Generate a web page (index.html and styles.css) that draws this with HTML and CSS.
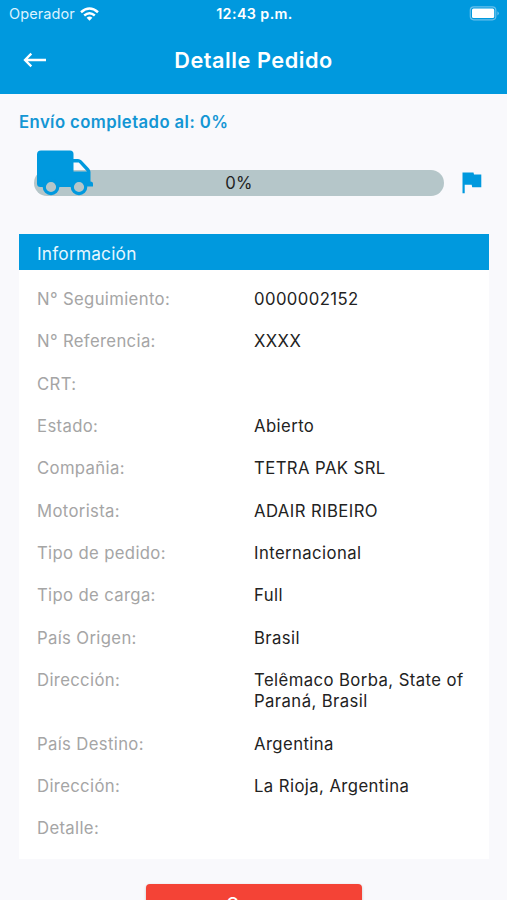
FILE: index.html
```html
<!DOCTYPE html>
<html lang="es">
<head>
<meta charset="utf-8">
<title>Detalle Pedido</title>
<link rel="stylesheet" href="styles.css">
</head>
<body>
<header class="header">
  <div class="status">
    <div class="carrier"><span>Operador</span>
      <svg width="19" height="14" viewBox="0 0 19 14"><g fill="none" stroke="#fff" stroke-width="2.5"><path d="M1 5.2Q9.5-2.2 18 5.2"/><path d="M4.2 8.5Q9.5 4 14.8 8.5"/></g><path d="M6.6 10.8Q9.5 8.4 12.4 10.8L9.5 13.8z" fill="#fff"/></svg>
    </div>
    <div class="clock">12:43 p.m.</div>
    <svg class="battery" width="31" height="15" viewBox="0 0 31 15"><rect x="1.3" y=".8" width="25.500" height="13" rx="3.500" fill="none" stroke="#68c0eb" stroke-width="1.200"/><rect x="3" y="2.600" width="22.200" height="9.400" rx="1.500" fill="#fff"/><path d="M28.400 5.200q3 2.200 0 4.400z" fill="#68c0eb"/></svg>
  </div>
  <div class="nav">
    <svg width="24" height="16" viewBox="0 0 24 16"><path d="M23 8H2.3M8.3 1.6L2 8l6.3 6.4" fill="none" stroke="#fff" stroke-width="2.3"/></svg>
    <h1>Detalle Pedido</h1>
  </div>
</header>
<main class="content">
  <p class="caption">Envío completado al: 0%</p>
  <div class="progress">
    <div class="bar">0%
      <svg class="truck" width="58" height="47" viewBox="0 0 58 47"><path fill="#0099de" fill-rule="evenodd" d="M5 .5H34Q37.5.5 37.5 4V9H42Q44 9 45.5 10.5L53 18.5Q54.5 20 54.5 22V31.5Q57 31.5 57 33.5V36.5H51A8.2 8.2 0 0 1 35.7 37H23.300A8.200 8.200 0 0 1 7.700 37H4.500Q1 37 1 33.500V4.500Q1 .5 5 .5ZM37.500 12.500V21.500H51L42.800 12.500Z"/><g fill="#b5c6c9" stroke="#0099de" stroke-width="3.200"><circle cx="15" cy="37" r="6.700"/><circle cx="43" cy="37" r="6.700"/></g></svg>
    </div>
    <svg class="flag" width="20" height="22" viewBox="0 0 20 22"><path d="M.5.5H11.5L12 2.5H19.3V15.3H10.2L9.7 12.8H2.7V21.3H.5z" fill="#0099de"/></svg>
  </div>
  <section class="card">
    <h2>Información</h2>
    <dl>
      <div><dt>N° Seguimiento:</dt><dd>0000002152</dd></div>
      <div><dt>N° Referencia:</dt><dd>XXXX</dd></div>
      <div><dt>CRT:</dt><dd></dd></div>
      <div><dt>Estado:</dt><dd>Abierto</dd></div>
      <div><dt>Compañia:</dt><dd>TETRA PAK SRL</dd></div>
      <div><dt>Motorista:</dt><dd>ADAIR RIBEIRO</dd></div>
      <div><dt>Tipo de pedido:</dt><dd>Internacional</dd></div>
      <div><dt>Tipo de carga:</dt><dd>Full</dd></div>
      <div><dt>País Origen:</dt><dd>Brasil</dd></div>
      <div><dt>Dirección:</dt><dd>Telêmaco Borba, State of Paraná, Brasil</dd></div>
      <div><dt>País Destino:</dt><dd>Argentina</dd></div>
      <div><dt>Dirección:</dt><dd>La Rioja, Argentina</dd></div>
      <div><dt>Detalle:</dt><dd></dd></div>
    </dl>
  </section>
  <button class="close">Cerrar</button>
</main>
</body>
</html>
```
FILE: styles.css
```css
* { box-sizing: border-box; }
body { margin: 0; height: 900px; overflow: hidden; background: #f9f9fc; color: #222; font: 16.7px/21.15px Inter, "Liberation Sans", sans-serif; letter-spacing: .35px; }
svg { display: block; flex: none; }
h1, h2, p, dl, dd { margin: 0; }
.header { height: 93.5px; background: #0099de; color: #fff; }
.status { display: grid; grid-template-columns: 1fr auto 1fr; height: 27px; padding: 0 7px 0 9px; align-items: center; }
.carrier { display: flex; align-items: center; gap: 5px; font-size: 14.5px; letter-spacing: .1px; color: #dcf3ff; }
.clock { font-size: 14.3px; font-weight: 600; letter-spacing: .4px; }
.battery { justify-self: end; }
.nav { display: grid; grid-template-columns: 1fr auto 1fr; align-items: center; height: 66px; padding: 0 23px; }
h1 { font-size: 21.7px; line-height: 28px; font-weight: 600; letter-spacing: .55px; }
.content { padding: 17.5px 18px 0 19px; }
.caption { color: #1496d4; font-size: 16.7px; font-weight: 600; line-height: 22px; letter-spacing: .42px; }
.progress { display: flex; align-items: center; height: 26px; margin: 37px 6px 0 15px; }
.bar { position: relative; width: 410px; height: 26px; border-radius: 13px; background: #b5c6c9; text-align: center; line-height: 26px; }
.truck { position: absolute; left: 2px; top: -20px; }
.flag { margin-left: 18px; }
.card { margin-top: 38px; height: 624.5px; background: #fff; }
h2 { height: 35.5px; padding: 2px 18px 0; background: #0099de; color: #e7f7ff; font-size: 17.3px; line-height: 36px; font-weight: 400; letter-spacing: .2px; }
dl { display: grid; gap: 21.2px; padding: 19.5px 18px; }
dl div { display: grid; grid-template-columns: 217px 1fr; min-height: 21.15px; }
dt { color: #a5a5a5; }
dd { letter-spacing: .42px; }
.close { display: block; width: 216px; height: 40px; margin: 25.5px 0 0 127px; padding: 0; border: 0; border-radius: 4px; background: #f44336; color: #fff; font: 500 17px/40px Inter, sans-serif; letter-spacing: .6px; box-shadow: 0 1px 3px #0003; }
```
